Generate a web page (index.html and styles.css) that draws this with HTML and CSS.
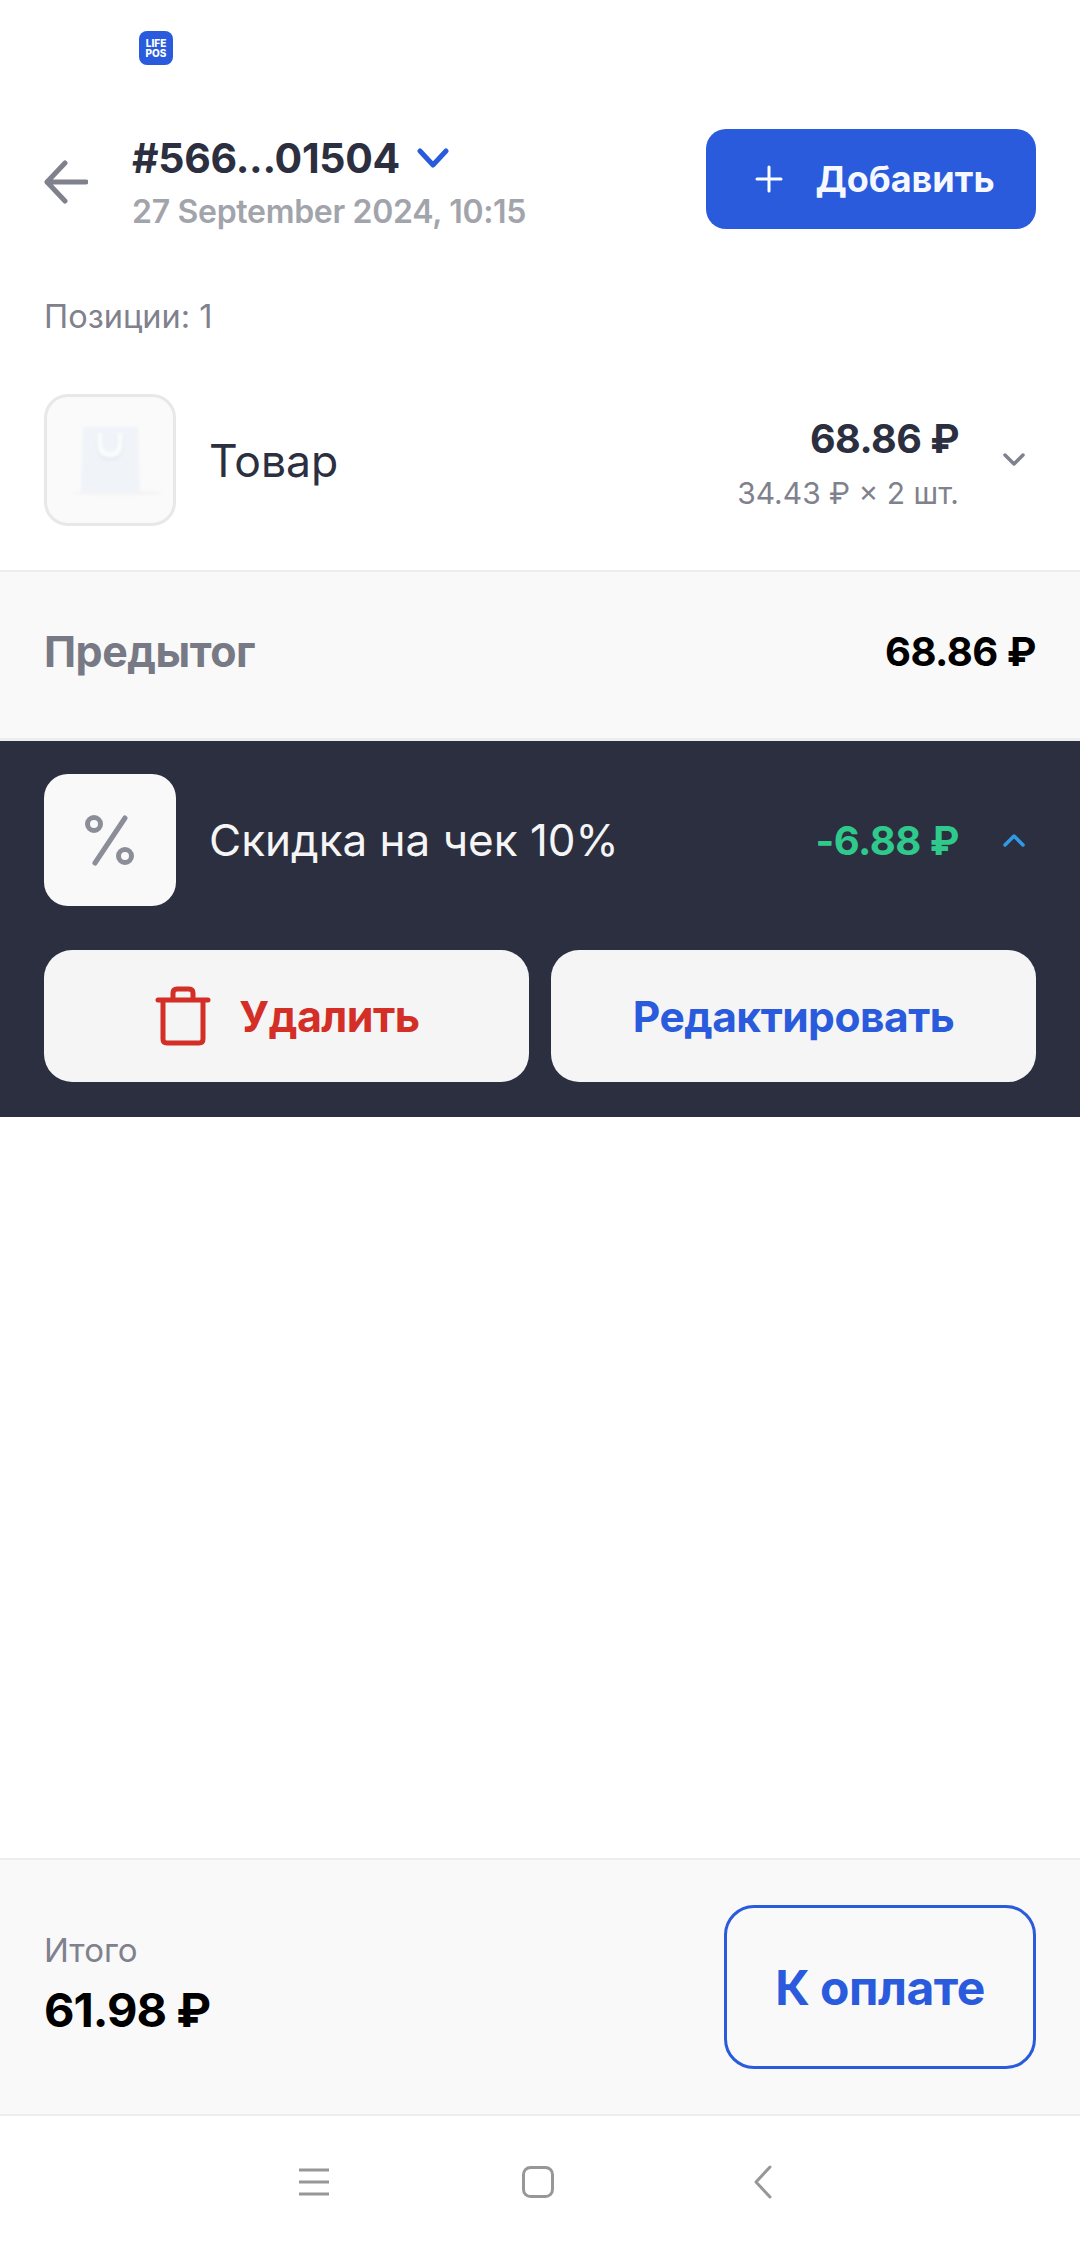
FILE: index.html
```html
<!DOCTYPE html>
<html lang="ru">
<head>
    <meta charset="UTF-8">
    <meta name="viewport" content="width=device-width, initial-scale=1.0">
    <title>Чек</title>
    <link rel="stylesheet" href="styles.css">
</head>
<body>
    <div class="page">
        <div class="status-bar">
            <div class="app-logo"><span>LIFE</span><span>POS</span></div>
        </div>

        <div class="header">
            <svg class="back-icon" viewBox="0 0 44 44" width="44" height="44" fill="none" stroke="#7f818d" stroke-width="5" stroke-linecap="round" stroke-linejoin="round">
                <path d="M42 22H3M21 3L3 22l18 19"/>
            </svg>
            <div class="order-info">
                <div class="order-number">
                    <span>#566...01504</span>
                    <svg viewBox="0 0 32 22" width="32" height="22" fill="none" stroke="#2a5bdd" stroke-width="5" stroke-linecap="round" stroke-linejoin="round">
                        <path d="M3 4l13 14L29 4"/>
                    </svg>
                </div>
                <div class="order-date">27 September 2024, 10:15</div>
            </div>
            <button class="add-button">
                <svg viewBox="0 0 28 28" width="28" height="28" fill="none" stroke="#fff" stroke-width="3" stroke-linecap="round">
                    <path d="M14 2v24M2 14h24"/>
                </svg>
                <span>Добавить</span>
            </button>
        </div>

        <div class="positions-label">Позиции: 1</div>

        <div class="item-row">
            <div class="thumb">
                <svg viewBox="0 0 126 126" width="126" height="126">
                    <defs>
                        <filter id="soft"><feGaussianBlur stdDeviation="1.6"/></filter>
                    </defs>
                    <g filter="url(#soft)">
                        <ellipse cx="70" cy="96" rx="46" ry="2.5" fill="#f4f4f6"/>
                        <path d="M36 30h55l2 65H34z" fill="#f0f3f8"/>
                        <path d="M53 38v8q0 14 10 14t10-14v-8" fill="none" stroke="#e6eaf1" stroke-width="7"/>
                        <path d="M53 36v10q0 12 10 12t10-12V36" fill="none" stroke="#fbfcfd" stroke-width="5"/>
                    </g>
                </svg>
            </div>
            <div class="item-name">Товар</div>
            <div class="item-prices">
                <div class="item-total">68.86 ₽</div>
                <div class="item-unit">34.43 ₽ × 2 шт.</div>
            </div>
            <svg class="row-chevron" viewBox="0 0 22 14" width="22" height="14" fill="none" stroke="#7f818d" stroke-width="3.5" stroke-linecap="round" stroke-linejoin="round">
                <path d="M2 2l9 9 9-9"/>
            </svg>
        </div>

        <div class="subtotal">
            <span class="subtotal-label">Предытог</span>
            <span class="subtotal-value">68.86 ₽</span>
        </div>

        <div class="discount">
            <div class="discount-row">
                <div class="percent-box">
                    <svg viewBox="0 0 52 52" width="52" height="52" fill="none" stroke="#8b8d98" stroke-width="5" stroke-linecap="round">
                        <circle cx="10" cy="10" r="6.5"/>
                        <circle cx="41" cy="42" r="6.5"/>
                        <path d="M41 4L11 49"/>
                    </svg>
                </div>
                <div class="discount-name">Скидка на чек 10%</div>
                <div class="discount-value">-6.88 ₽</div>
                <svg class="row-chevron" viewBox="0 0 22 14" width="22" height="14" fill="none" stroke="#2f9be6" stroke-width="3.5" stroke-linecap="round" stroke-linejoin="round">
                    <path d="M2 12l9-9 9 9"/>
                </svg>
            </div>
            <div class="discount-actions">
                <button class="action-button delete">
                    <svg viewBox="0 0 56 60" width="56" height="60" fill="none" stroke="#d32f26" stroke-width="5" stroke-linecap="round" stroke-linejoin="round">
                        <path d="M3 14h50M18 13V7q0-4 4-4h12q4 0 4 4v6M8 14v39q0 4 4 4h32q4 0 4-4V14"/>
                    </svg>
                    <span>Удалить</span>
                </button>
                <button class="action-button edit">Редактировать</button>
            </div>
        </div>

        <div class="spacer"></div>

        <div class="footer">
            <div class="total">
                <div class="total-label">Итого</div>
                <div class="total-value">61.98 ₽</div>
            </div>
            <button class="pay-button">К оплате</button>
        </div>

        <div class="nav-bar">
            <svg viewBox="0 0 30 28" width="30" height="28" fill="none" stroke="#979797" stroke-width="3">
                <path d="M0 2h30M0 14h30M0 26h30"/>
            </svg>
            <svg viewBox="0 0 32 32" width="32" height="32" fill="none" stroke="#979797" stroke-width="3">
                <rect x="1.5" y="1.5" width="29" height="29" rx="7"/>
            </svg>
            <svg class="nav-back" viewBox="0 0 18 34" width="18" height="34" fill="none" stroke="#979797" stroke-width="3" stroke-linecap="round" stroke-linejoin="round">
                <path d="M16 2L2 17l14 15"/>
            </svg>
        </div>
    </div>
</body>
</html>
```

FILE: styles.css
```css
body {
    margin: 0;
    font-family: Inter, "Noto Sans", sans-serif;
    background-color: #fff;
}

button {
    font-family: inherit;
    cursor: pointer;
}

.page {
    width: 1080px;
    height: 2244px;
    display: flex;
    flex-direction: column;
    overflow: hidden;
}

.status-bar {
    height: 129px;
    padding: 31px 0 0 139px;
    box-sizing: border-box;
}

.app-logo {
    width: 34px;
    height: 34px;
    border-radius: 8px;
    background-color: #2a5bdd;
    color: #fff;
    font-size: 10px;
    line-height: 10px;
    font-weight: 800;
    display: flex;
    flex-direction: column;
    align-items: center;
    justify-content: center;
}

.header {
    display: flex;
    align-items: center;
    padding: 0 44px;
    height: 100px;
}

.back-icon {
    flex-shrink: 0;
    margin-top: 6px;
}

.order-info {
    margin-left: 44px;
    margin-top: 5px;
    flex: 1;
}

.order-number {
    display: flex;
    align-items: center;
    gap: 17px;
    font-size: 41px;
    line-height: 52px;
    font-weight: 700;
    color: #2c2f40;
    letter-spacing: -0.3px;
}

.order-date {
    font-size: 32px;
    line-height: 40px;
    font-weight: 600;
    color: #a2a4ab;
    margin-top: 8px;
    letter-spacing: -0.3px;
}

.add-button {
    width: 330px;
    height: 100px;
    padding: 0 0 0 8px;
    border: none;
    border-radius: 20px;
    background-color: #2a5bdd;
    color: #f5f8ff;
    font-size: 36px;
    font-weight: 700;
    display: flex;
    align-items: center;
    justify-content: center;
    gap: 32px;
}

.positions-label {
    margin: 68px 0 0 44px;
    font-size: 32.5px;
    line-height: 40px;
    color: #7f818d;
}

.item-row {
    display: flex;
    align-items: center;
    margin-top: 57px;
    padding: 0 44px 44px;
}

.thumb {
    width: 126px;
    height: 126px;
    border: 3px solid #e8e8ea;
    border-radius: 24px;
    background-color: #fafafa;
    flex-shrink: 0;
    overflow: hidden;
}

.thumb svg {
    display: block;
}

.item-name {
    margin-left: 33px;
    padding-top: 2px;
    flex: 1;
    font-size: 44.5px;
    color: #2c2f40;
}

.item-prices {
    text-align: right;
    padding-top: 6px;
}

.item-total {
    font-size: 39.5px;
    line-height: 50px;
    font-weight: 700;
    color: #2c2f40;
    letter-spacing: -0.5px;
}

.item-unit {
    margin-top: 9px;
    font-size: 30px;
    line-height: 40px;
    color: #7f818d;
}

.row-chevron {
    margin: 0 11px 0 44px;
    flex-shrink: 0;
}

.subtotal {
    display: flex;
    justify-content: space-between;
    align-items: center;
    height: 158px;
    padding: 0 44px 8px;
    background-color: #f9f9f9;
    border-top: 2px solid #eceded;
    border-bottom: 3px solid #eceded;
}

.subtotal-label {
    font-size: 43px;
    font-weight: 700;
    color: #777985;
    letter-spacing: -0.5px;
}

.subtotal-value {
    font-size: 40px;
    font-weight: 700;
    color: #000;
    letter-spacing: -0.5px;
}

.discount {
    background-color: #2c2f40;
    padding: 33px 44px 35px;
}

.discount-row {
    display: flex;
    align-items: center;
}

.percent-box {
    width: 132px;
    height: 132px;
    border-radius: 24px;
    background-color: #f9f9f9;
    flex-shrink: 0;
    display: flex;
    align-items: center;
    justify-content: center;
}

.discount-name {
    margin-left: 33px;
    flex: 1;
    font-size: 44px;
    color: #f5f5f6;
}

.discount-value {
    font-size: 40px;
    font-weight: 700;
    color: #2fc98c;
    letter-spacing: -0.5px;
}

.discount-actions {
    display: grid;
    grid-template-columns: 1fr 1fr;
    gap: 22px;
    margin-top: 44px;
}

.action-button {
    height: 132px;
    border: none;
    border-radius: 28px;
    background-color: #f5f5f6;
    font-size: 43px;
    font-weight: 700;
    display: flex;
    align-items: center;
    justify-content: center;
    letter-spacing: -0.5px;
}

.action-button.delete {
    color: #d32f26;
    gap: 28px;
    padding-left: 8px;
}

.action-button.edit {
    color: #2a5bdd;
    font-size: 42.5px;
}

.spacer {
    flex: 1;
}

.footer {
    display: flex;
    justify-content: space-between;
    align-items: center;
    height: 254px;
    padding: 0 44px;
    background-color: #f9f9f9;
    border-top: 2px solid #eceded;
    border-bottom: 2px solid #eceded;
}

.total {
    margin-bottom: 4px;
}

.total-label {
    font-size: 33px;
    line-height: 40px;
    color: #7f818d;
}

.total-value {
    margin-top: 9px;
    font-size: 47px;
    line-height: 62px;
    font-weight: 700;
    color: #000;
    letter-spacing: -1px;
}

.pay-button {
    width: 312px;
    height: 164px;
    box-sizing: border-box;
    border: 3px solid #2a5bdd;
    border-radius: 30px;
    background-color: transparent;
    color: #2a5bdd;
    font-size: 48px;
    font-weight: 700;
    letter-spacing: -0.5px;
}

.nav-bar {
    flex: none;
    height: 124px;
    padding: 4px 0 0 299px;
    display: flex;
    align-items: center;
    gap: 193px;
}

.nav-back {
    margin-left: 7px;
}
```
